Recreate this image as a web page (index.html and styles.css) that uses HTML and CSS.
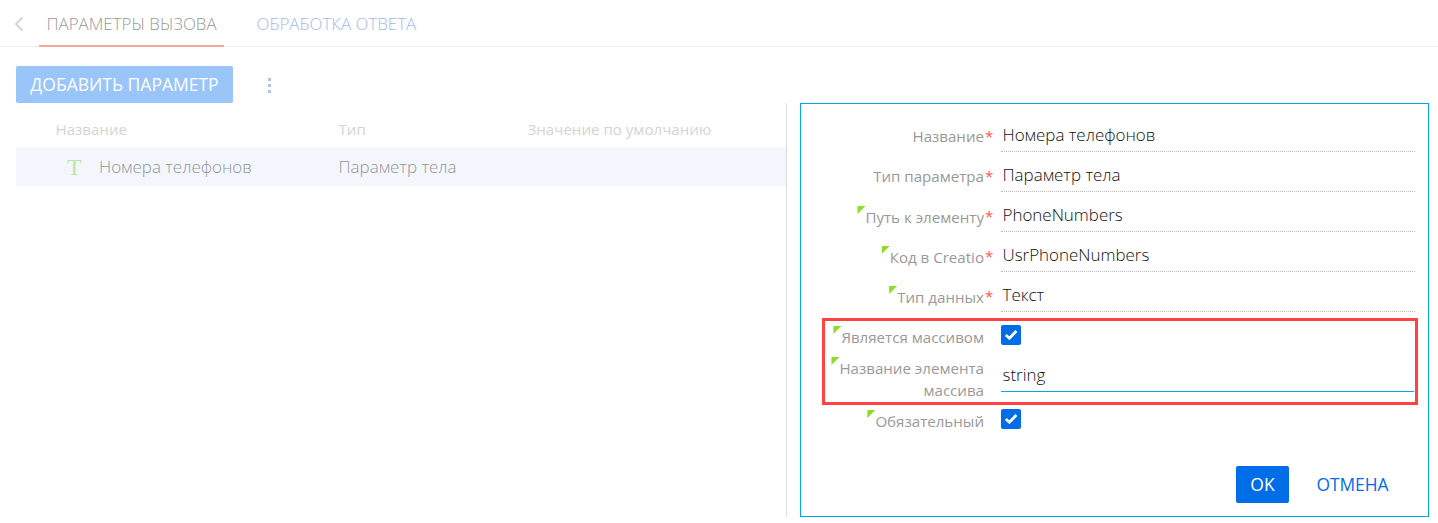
FILE: index.html
```html
<!DOCTYPE html>
<html lang="ru">
<head>
<meta charset="utf-8">
<title>Параметры вызова</title>
<link rel="stylesheet" href="styles.css">
</head>
<body>
<nav class="tabs">
  <svg class="back" width="10" height="16" viewBox="0 0 10 16"><path d="M8.5 1.5 1.8 8l6.7 6.5" fill="none" stroke="#d3d3d3" stroke-width="1.8"/></svg>
  <a class="tab tab-active">ПАРАМЕТРЫ ВЫЗОВА</a>
  <a class="tab">ОБРАБОТКА ОТВЕТА</a>
</nav>
<div class="toolbar">
  <button class="add">ДОБАВИТЬ ПАРАМЕТР</button>
  <span class="more"><i></i><i></i><i></i></span>
</div>
<main class="content">
  <section class="grid">
    <div class="grid-row grid-head"><span class="c-name">Название</span><span class="c-type">Тип</span><span class="c-default">Значение по умолчанию</span></div>
    <div class="grid-row grid-item"><span class="type-icon">T</span><span class="c-title">Номера телефонов</span><span class="c-type">Параметр тела</span></div>
  </section>
  <section class="panel">
    <div class="field"><label class="label"><span>Название</span></label><b class="req">*</b><div class="value">Номера телефонов</div></div>
    <div class="field"><label class="label"><span>Тип параметра</span></label><b class="req">*</b><div class="value">Параметр тела</div></div>
    <div class="field"><label class="label label-flagged"><i class="flag"></i><span>Путь к элементу</span></label><b class="req">*</b><div class="value">PhoneNumbers</div></div>
    <div class="field"><label class="label label-flagged"><i class="flag"></i><span>Код в Creatio</span></label><b class="req">*</b><div class="value">UsrPhoneNumbers</div></div>
    <div class="field"><label class="label label-flagged"><i class="flag"></i><span>Тип данных</span></label><b class="req">*</b><div class="value">Текст</div></div>
    <div class="highlight">
      <div class="field field-check"><label class="label"><i class="flag"></i><span>Является массивом</span></label><span class="check"><svg width="20" height="20" viewBox="0 0 20 20"><path d="m4.8 10 3.6 3.3 7-7.3" fill="none" stroke="#fff" stroke-width="2.7"/></svg></span></div>
      <div class="field field-tall"><label class="label"><i class="flag"></i><span>Название элемента<br>массива</span></label><div class="value value-focus">string</div></div>
    </div>
    <div class="field field-check field-last"><label class="label"><i class="flag"></i><span>Обязательный</span></label><span class="check"><svg width="20" height="20" viewBox="0 0 20 20"><path d="m4.8 10 3.6 3.3 7-7.3" fill="none" stroke="#fff" stroke-width="2.7"/></svg></span></div>
    <div class="actions"><button class="ok">OK</button><button class="cancel">ОТМЕНА</button></div>
  </section>
</main>
</body>
</html>
```
FILE: styles.css
```css
* { box-sizing: border-box; }
body { margin: 0; height: 523px; overflow: hidden; background: #fff; font: 16.95px/22px "Open Sans", sans-serif; color: #444; }
button { margin: 0; padding: 0 0 2px; border: 0; font: inherit; }
.tabs { display: flex; height: 47px; padding-left: 14px; border-bottom: 1px solid #ececec; }
.back { margin: 16px 15px 0 0; }
.tab { width: 185px; height: 47px; margin-right: 25px; padding: 13px 0 0 7.5px; color: #a3baed; white-space: nowrap; font-size: 16.9px; font-weight: 300; }
.tab-active { color: #989898; border-bottom: 2px solid #fca698; }
.toolbar { display: flex; height: 56px; padding: 19px 0 0 16px; }
.add { width: 217px; height: 37px; border-radius: 2px; background: #99c5f8; color: #fff; font-size: 17.5px; }
.more { display: flex; flex-direction: column; gap: 3px; margin: 12px 0 0 35px; }
.more i { width: 3px; height: 3px; background: #b3c3ea; }
.content { display: flex; gap: 13px; height: 414px; }
.grid { width: 787px; padding-left: 16px; border-right: 1px solid #dedede; }
.grid-row { display: flex; align-items: center; white-space: nowrap; }
.grid-head { height: 44px; padding: 7px 0 0 39.5px; color: #d4d4d4; font-size: 15.1px; }
.grid-item { height: 39px; padding-left: 51px; background: #f3f7fd; color: #959595; font-weight: 300; }
.c-name { width: 283px; }
.c-type { width: 189px; }
.type-icon { width: 32px; color: #c2e3a8; font: 24px/24px "Liberation Serif", serif; }
.c-title { width: 239.5px; }
.panel { width: 629px; border: 1px solid #00a8ea; padding: 8px 11px 0 21px; }
.field { display: flex; height: 40px; }
.label { display: flex; justify-content: flex-end; align-items: flex-start; width: 162px; padding-top: 13px; color: #999; font-size: 15.1px; line-height: 22px; text-align: right; white-space: nowrap; }
.label-flagged { padding-top: 14px; }
.flag { width: 8px; height: 8px; background: #8fdc2b; clip-path: polygon(0 0, 100% 0, 0 100%); }
.req { width: 17px; padding: 13px 0 0 1px; color: #fa5b48; font-weight: 400; font-size: 15px; }
.value { width: 414px; padding: 12px 0 0 1.5px; border-bottom: 1px dotted #b9b9b9; color: #111; font-weight: 300; }
.highlight { width: 596px; height: 87px; margin-top: 6px; border: 3px solid #ff4343; }
.highlight .field { margin-left: -3px; }
.field-check { height: 31px; }
.check { width: 20px; height: 20px; margin: 4px 0 0 17px; border-radius: 2px; background: #006de8; }
.highlight .label, .field-last .label { padding-top: 5px; }
.highlight .field-tall { height: 40px; }
.value-focus { margin-left: 17px; width: 413px; border-bottom: 1px solid #00a8ea; }
.actions { display: flex; justify-content: flex-end; margin-top: 30px; padding-right: 28px; }
.ok { width: 53px; height: 37px; border-radius: 2px; background: #006de8; color: #fff; font-size: 17.5px; }
.cancel { width: 73px; margin-left: 27px; background: none; color: #006de8; font-size: 17.4px; }
```
